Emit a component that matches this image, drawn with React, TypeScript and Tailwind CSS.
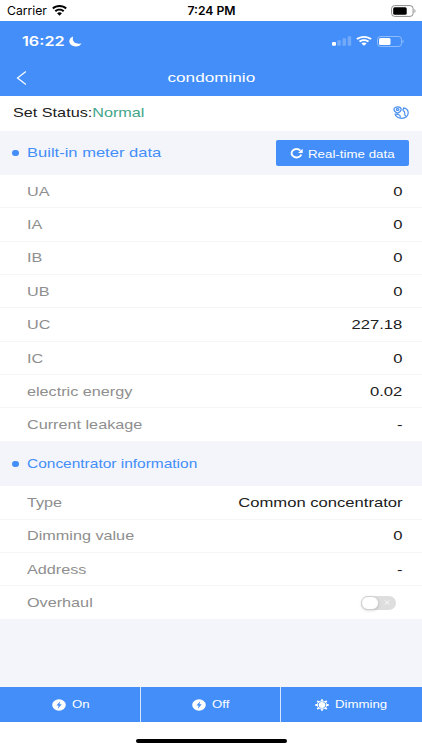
import clsx from 'clsx';

const meterRows = [
  { label: 'UA', value: '0' },
  { label: 'IA', value: '0' },
  { label: 'IB', value: '0' },
  { label: 'UB', value: '0' },
  { label: 'UC', value: '227.18' },
  { label: 'IC', value: '0' },
  { label: 'electric energy', value: '0.02' },
  { label: 'Current leakage', value: '-' },
];

const infoRows = [
  { label: 'Type', value: 'Common concentrator' },
  { label: 'Dimming value', value: '0' },
  { label: 'Address', value: '-' },
  { label: 'Overhaul', toggle: true },
];

const WifiIcon = ({ className }: { className?: string }) => (
  <svg viewBox="0 0 16 12" preserveAspectRatio="none" fill="currentColor" className={className}>
    <path d="M8 0C5 0 2.200 1.100.2 3l1.500 1.600C3.400 3 5.600 2.200 8 2.200s4.600.8 6.300 2.400L15.800 3C13.800 1.100 11 0 8 0Z" />
    <path d="M8 4C6 4 4.200 4.700 2.800 6l1.500 1.600a5.400 5.400 0 0 1 7.400 0L13.200 6C11.800 4.700 10 4 8 4Z" />
    <path d="M8 7.900c-1 0-1.900.4-2.600 1L8 11.700l2.600-2.800c-.7-.6-1.600-1-2.600-1Z" />
  </svg>
);

const BoltIcon = () => (
  <svg viewBox="0 0 14 12" className="h-[12px] w-[14px]">
    <ellipse cx="7" cy="6" rx="6.800" ry="5.700" fill="white" />
    <path d="M8.200 2.300 4.400 6.600h2.200L5.900 9.700l3.800-4.400H7.400Z" fill="#438ef8" />
  </svg>
);

const SunIcon = () => (
  <svg viewBox="0 0 14 12" preserveAspectRatio="none" className="h-[12px] w-[14px]" stroke="white">
    <ellipse cx="7" cy="6" rx="3.400" ry="2.900" fill="white" stroke="none" />
    <ellipse cx="7" cy="6" rx="4.800" ry="4" fill="none" strokeWidth="1" />
    <path d="M7 .3v2M7 9.700v2M.3 6h2.200M11.500 6h2.200M2.200 1.900l1.700 1.500M10.100 8.600l1.700 1.500M2.200 10.100l1.700-1.500M10.100 3.400l1.700-1.500" strokeWidth="1.800" fill="none" />
  </svg>
);

const MapIcon = () => (
  <svg viewBox="0 0 16 14" className="h-[14px] w-[16px]" fill="none" stroke="#4a8ff0" strokeWidth="1.200" strokeLinejoin="round">
    <path d="M4.600 7.300C2.100 6 .9 4.800.9 3.500.9 2 2.500.9 4.600.9s3.600 1.100 3.600 2.600c0 1.300-1.200 2.500-3.600 3.800Z" />
    <ellipse cx="4.600" cy="3.400" rx="1.300" ry=".9" />
    <path d="M10 1.900c3 .3 5.200 2.400 5.200 5 0 3-2.700 5.400-6.300 5.400-3.300 0-6.200-1.700-7-4.600" />
    <path d="M11 2.200c-1 .9-1.500 1.700-.6 2.600 1.300 1 1.600 1.700 1.300 2.700-.3 1 .2 1.900 1.200 2.700M2.400 8.200c2-.2 3.700.3 4.600 1.400.5.700.3 1.500 0 2.300" />
  </svg>
);

const SectionTitle = ({ text, className }: { text: string; className: string }) => (
  <div className="flex items-center text-[#438ef8]">
    <span className="ml-[12px] h-[6px] w-[7px] rounded-full bg-[#438ef8]" />
    <span className={clsx('ml-[8px] origin-left', className)}>{text}</span>
  </div>
);

const Row = ({ label, value, toggle }: { label: string; value?: string; toggle?: boolean }) => (
  <div className="flex h-[33.350px] items-center justify-between border-b border-[#f6f6f8] bg-white pt-[1.500px] pr-[19.500px] pl-[26.500px]">
    <span className="origin-left scale-x-[1.2] text-[13.500px] text-[#8e8e8e]">{label}</span>
    {toggle ? (
      <span className="mr-[7px] mb-px flex h-[14px] w-[35px] items-center rounded-full bg-[#dedede] pr-[5.500px]">
        <span className="h-[14px] w-[18px] rounded-full border border-[#cfcfcf] bg-white shadow-sm" />
        <svg viewBox="0 0 6 5" className="ml-auto h-[5px] w-[6px]" stroke="white" strokeWidth="0.8">
          <path d="m.5.3 5 4.400M5.500.3l-5 4.400" />
        </svg>
      </span>
    ) : (
      <span className="origin-right scale-x-[1.23] text-[13.500px] text-[#202020]">{value}</span>
    )}
  </div>
);

const actions = [
  { label: 'On', icon: <BoltIcon />, className: 'pl-[52px]' },
  { label: 'Off', icon: <BoltIcon />, className: 'pl-[51.500px]' },
  { label: 'Dimming', icon: <SunIcon />, className: 'pl-[34px]' },
];

export default function App() {
  return (
    <div className="flex h-[750px] w-[422px] flex-col overflow-hidden bg-white font-['Liberation_Sans',Arial,sans-serif] whitespace-nowrap">
      <div className="grid h-[21px] shrink-0 grid-cols-3 items-center pt-[2px] pr-[6px] pl-[7px] font-['Inter','Liberation_Sans',sans-serif] text-[12.200px] text-black">
        <div className="flex items-center gap-[5px]">
          <span className="w-[39.500px]">Carrier</span>
          <WifiIcon className="mb-px h-[11px] w-[15px]" />
        </div>
        <span className="text-center font-semibold">7:24 PM</span>
        <svg viewBox="0 0 25 12" className="mb-px h-[12px] w-[25px] justify-self-end">
          <rect x=".6" y=".6" width="21.500" height="10.800" rx="3" fill="none" stroke="#8c8c8c" />
          <rect x="2.200" y="2.200" width="13.500" height="7.600" rx="1.500" fill="black" />
          <path d="M23.500 4v4c1.300-.7 1.300-3.300 0-4Z" fill="#8c8c8c" />
        </svg>
      </div>

      <header className="flex h-[74.500px] shrink-0 flex-col bg-[#438ef8] text-white">
        <div className="flex h-[39px] items-center pt-px pr-[18px] pl-[22px]">
          <span className="w-[47px] origin-left scale-x-[1.25] pt-px font-['Inter','Liberation_Sans',sans-serif] text-[13px] font-semibold">16:22</span>
          <svg viewBox="0 0 13 11" className="h-[11px] w-[13px]" fill="white">
            <path d="M4.200.5C1.800 1.200.3 3 .3 5.300c0 3 2.900 5.200 6.400 5.200 2.700 0 5-1.300 5.900-3.300-1 .4-1.900.5-2.800.5C6.600 7.700 4 5.900 3.800 3c0-.9.1-1.700.4-2.500Z" />
          </svg>
          <svg viewBox="0 0 20 10" className="ml-auto h-[10px] w-[20px]" fill="white">
            <rect x="0" y="6" width="4" height="3.700" rx="1" />
            <g opacity=".25">
              <rect x="5.300" y="4.300" width="3.500" height="5.400" rx=".7" />
              <rect x="10.500" y="2.300" width="3.500" height="7.400" rx=".7" />
              <rect x="15.700" y=".3" width="3.500" height="9.400" rx=".7" />
            </g>
          </svg>
          <WifiIcon className="ml-[4px] h-[10px] w-[16px]" />
          <svg viewBox="0 0 27 11" className="ml-[5px] h-[11px] w-[27px]">
            <rect x=".5" y=".5" width="24" height="10" rx="3" fill="none" stroke="white" strokeOpacity=".4" />
            <rect x="2" y="2" width="11.500" height="7" rx="1.500" fill="white" />
            <path d="M25.700 3.800v3.400c1.200-.5 1.200-2.900 0-3.400Z" fill="white" opacity=".5" />
          </svg>
        </div>
        <div className="grid h-[35px] grid-cols-3 items-center">
          <svg viewBox="0 0 10 14" className="ml-[16px] h-[14px] w-[11px]" fill="none" stroke="white" strokeWidth="1.200">
            <path d="M9.400.5 1 7l8.400 6.500" />
          </svg>
          <span className="scale-x-[1.27] pt-[2px] text-center text-[13.500px]">condominio</span>
        </div>
      </header>

      <div className="flex h-[35px] shrink-0 items-center justify-between pr-[13px] pl-[12.500px]">
        <span className="origin-left scale-x-[1.2] pt-px text-[13.500px] text-[#202020]">
          Set Status:<span className="text-[#42a588]">Normal</span>
        </span>
        <MapIcon />
      </div>

      <main className="flex grow flex-col bg-[#f3f5fa]">
        <div className="flex h-[44.500px] shrink-0 items-center justify-between pr-[13px]">
          <SectionTitle text="Built-in meter data" className="scale-x-[1.225] text-[13.500px]" />
          <button className="flex h-[26px] w-[133px] items-center rounded-[2px] bg-[#438ef8] pl-[14px] text-white">
            <svg viewBox="0 0 13 11" className="mt-[2px] h-[11px] w-[13px]" fill="none" stroke="white" strokeWidth="1.900">
              <path d="M10.400 2.600A5 4.200 0 1 0 11.300 6.500" />
              <path d="M12.700.7v4.400H8.100Z" fill="white" stroke="none" />
            </svg>
            <span className="ml-[5px] origin-left scale-x-[1.21] pt-[2px] text-[11px]">Real-time data</span>
          </button>
        </div>
        {meterRows.map((row) => (
          <Row key={row.label} {...row} />
        ))}
        <div className="flex h-[44.500px] shrink-0 items-center">
          <SectionTitle text="Concentrator information" className="scale-x-[1.19] text-[13px]" />
        </div>
        {infoRows.map((row) => (
          <Row key={row.label} {...row} />
        ))}
      </main>

      <nav className="grid h-[35px] shrink-0 grid-cols-3 divide-x divide-[#d5e5fd] bg-[#438ef8] text-white">
        {actions.map((action) => (
          <button key={action.label} className={clsx('flex items-center pt-px text-[11.500px]', action.className)}>
            {action.icon}
            <span className="ml-[6px] origin-left scale-x-[1.15]">{action.label}</span>
          </button>
        ))}
      </nav>

      <div className="flex h-[28.500px] shrink-0 justify-center pt-[17px]">
        <span className="h-[4px] w-[151px] rounded-full bg-black" />
      </div>
    </div>
  );
}
